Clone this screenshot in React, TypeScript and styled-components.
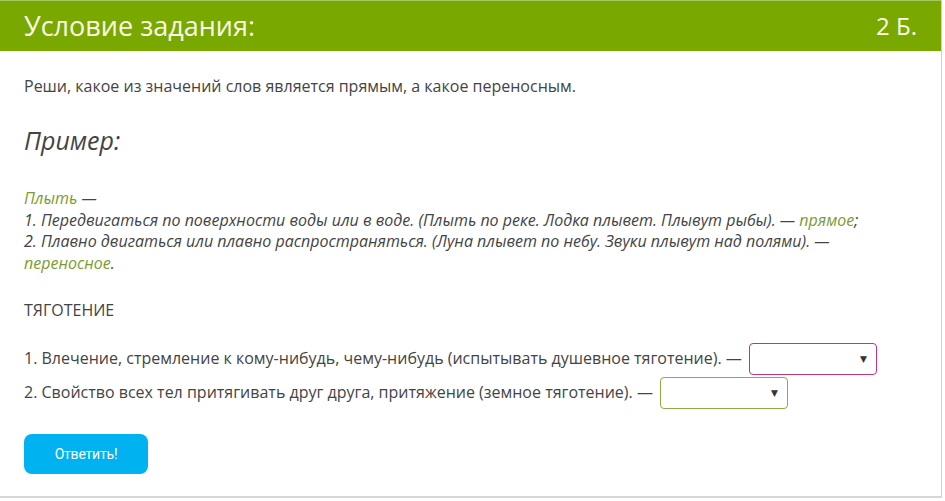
import React from "react";
import styled, { createGlobalStyle } from "styled-components";

const GlobalStyle = createGlobalStyle`
  html, body {
    margin: 0;
    padding: 0;
    background: #ffffff;
  }
  body {
    font-family: "Open Sans", "DejaVu Sans", sans-serif;
    color: #444444;
  }
`;

const Panel = styled.div`
  width: 942px;
  height: 498px;
  box-sizing: border-box;
  border-right: 1px solid #cfcfcf;
  border-bottom: 2px solid #d6d6d6;
  background: #ffffff;
`;

const Header = styled.div`
  height: 51px;
  box-sizing: border-box;
  border-top: 1px solid #a6c760;
  background: #79a800;
  color: #fbfbe6;
  display: flex;
  align-items: center;
  justify-content: space-between;
  padding: 0 24px 1px 24px;
`;

const Title = styled.h1`
  margin: 0;
  font-size: 27px;
  font-weight: 400;
`;

const Score = styled.span`
  font-size: 24px;
`;

const Body = styled.div`
  padding: 25px 24px 0 24px;
  font-size: 16px;
  line-height: 21px;
`;

const Paragraph = styled.p`
  margin: 0;
`;

const ExampleTitle = styled.h2`
  margin: 27px 0 0 0;
  font-size: 25px;
  font-weight: 400;
  font-style: italic;
  line-height: 32px;
`;

const Example = styled.div`
  margin-top: 32px;
  font-style: italic;
  line-height: 21.7px;
`;

const Accent = styled.span`
  color: #7b9b2e;
`;

const Word = styled.p`
  margin: 25px 0 0 0;
`;

const Rows = styled.div`
  margin-top: 22px;
  display: flex;
  flex-direction: column;
  gap: 2px;
`;

const Row = styled.div`
  display: flex;
  align-items: center;
  gap: 7px;
`;

const Select = styled.div<{ $border: string }>`
  width: 128px;
  height: 32px;
  box-sizing: border-box;
  border: 1px solid ${(p) => p.$border};
  border-radius: 4px;
  display: flex;
  align-items: center;
  justify-content: flex-end;
  padding-right: 9px;
  font-size: 9px;
  color: #333333;
`;

const Button = styled.button`
  margin-top: 25px;
  width: 124px;
  height: 40px;
  border: none;
  border-radius: 8px;
  background: #00b2f0;
  color: #ffffff;
  font-family: "Roboto", "Liberation Sans", sans-serif;
  font-size: 14px;
  letter-spacing: -0.2px;
  cursor: pointer;
`;

export default function App() {
  return (
    <>
      <GlobalStyle />
      <Panel>
        <Header>
          <Title>Условие задания:</Title>
          <Score>2 Б.</Score>
        </Header>
        <Body>
          <Paragraph>
            Реши, какое из значений слов является прямым, а какое переносным.
          </Paragraph>
          <ExampleTitle>Пример:</ExampleTitle>
          <Example>
            <Accent>Плыть</Accent> —
            <br />
            1. Передвигаться по поверхности воды или в воде. (Плыть по реке.
            Лодка плывет. Плывут рыбы). — <Accent>прямое</Accent>;
            <br />
            2. Плавно двигаться или плавно распространяться. (Луна плывет по
            небу. Звуки плывут над полями). —
            <br />
            <Accent>переносное</Accent>.
          </Example>
          <Word>ТЯГОТЕНИЕ</Word>
          <Rows>
            <Row>
              1. Влечение, стремление к кому-нибудь, чему-нибудь (испытывать
              душевное тяготение). —
              <Select $border="#c2347f">▼</Select>
            </Row>
            <Row>
              2. Свойство всех тел притягивать друг друга, притяжение (земное
              тяготение). —
              <Select $border="#8fa944">▼</Select>
            </Row>
          </Rows>
          <Button>Ответить!</Button>
        </Body>
      </Panel>
    </>
  );
}
